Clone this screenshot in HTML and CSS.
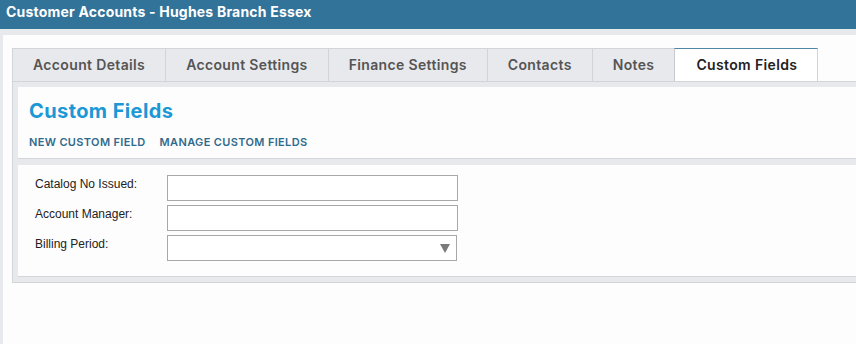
FILE: index.html
```html
<!DOCTYPE html>
<html lang="en">
<head>
<meta charset="utf-8">
<title>Customer Accounts - Hughes Branch Essex</title>
<link rel="stylesheet" href="styles.css">
</head>
<body>
<header class="appbar">Customer Accounts - Hughes Branch Essex</header>
<main class="page">
  <div class="tabbar">
    <div class="tab">Account Details</div>
    <div class="tab">Account Settings</div>
    <div class="tab">Finance Settings</div>
    <div class="tab">Contacts</div>
    <div class="tab">Notes</div>
    <div class="tab active">Custom Fields</div>
  </div>
  <div class="tabbody">
    <section class="panel head-panel">
      <h1 class="title">Custom Fields</h1>
      <nav class="links">
        <a class="link">NEW CUSTOM FIELD</a>
        <a class="link">MANAGE CUSTOM FIELDS</a>
      </nav>
    </section>
    <section class="panel form-panel">
      <div class="form">
        <label class="label">Catalog No Issued:</label>
        <input class="field" type="text">
        <label class="label">Account Manager:</label>
        <input class="field" type="text">
        <label class="label">Billing Period:</label>
        <div class="field select">
          <svg class="arrow" width="10" height="9" viewBox="0 0 10 9"><polygon points="0,0 10,0 5,9" fill="#7a7a7a"/></svg>
        </div>
      </div>
    </section>
  </div>
</main>
</body>
</html>
```

FILE: styles.css
```css
html, body {
  margin: 0;
  padding: 0;
  height: 100%;
}
body {
  background: #e8e9ed;
  overflow: hidden;
  font-family: Inter, "Open Sans", sans-serif;
}
.appbar {
  height: 29px;
  box-sizing: border-box;
  background: #32739a;
  color: #fff;
  font-weight: 700;
  font-size: 14px;
  line-height: 18px;
  padding: 3px 0 0 6px;
  letter-spacing: 0.2px;
}
.page {
  margin: 6px 0 0 3px;
  background: #fdfdfd;
  height: 315px;
  padding: 13px 0 0 9px;
  box-sizing: border-box;
}
.tabbar {
  display: flex;
  border-bottom: 1px solid #d2d4d8;
  height: 34px;
  box-sizing: border-box;
}
.tab {
  background: #e8e9ed;
  border-top: 1px solid #d2d4d8;
  border-right: 1px solid #d2d4d8;
  padding: 0 20px;
  font-size: 14px;
  font-weight: 600;
  color: #555;
  line-height: 32px;
  height: 33px;
  box-sizing: border-box;
  letter-spacing: 0.35px;
}
.tab:first-child {
  border-left: 1px solid #d2d4d8;
}
.tab.active {
  background: #fff;
  color: #222;
  border-top-color: #4f86a3;
  border-left: 1px solid #c8cace;
  margin-left: -1px;
  padding: 0 20px 0 21px;
}
.tabbody {
  background: #e8e9ed;
  border-left: 1px solid #d2d4d8;
  border-bottom: 1px solid #d2d4d8;
  padding: 5px 0 5px 5px;
  display: flex;
  flex-direction: column;
  gap: 6px;
}
.panel {
  background: #fdfdfd;
  border-bottom: 1px solid #d4d6da;
}
.head-panel {
  height: 72px;
  box-sizing: border-box;
  padding: 12px 0 0 11px;
}
.title {
  margin: 0;
  font-size: 20px;
  font-weight: 700;
  color: #1b98d5;
  line-height: 24px;
  letter-spacing: 0.4px;
}
.links {
  display: flex;
  gap: 14px;
  margin-top: 12px;
}
.link {
  font-size: 11px;
  font-weight: 600;
  color: #2f6b8c;
  line-height: 14px;
  letter-spacing: 0.35px;
}
.form-panel {
  padding: 10px 0 15px 17px;
}
.form {
  display: grid;
  grid-template-columns: 132px 291px;
  row-gap: 4px;
}
.label {
  font-family: "Liberation Sans", Arial, sans-serif;
  font-size: 12px;
  color: #222;
  padding-top: 2px;
  line-height: 14px;
}
.field {
  margin: 0;
  height: 26px;
  box-sizing: border-box;
  border: 1px solid #a8a8a8;
  background: #fff;
  border-radius: 0;
  padding: 0 4px;
  outline: none;
}
.select {
  width: 290px;
  height: 26px;
  display: flex;
  align-items: center;
  justify-content: flex-end;
  padding-right: 6px;
}
.arrow {
  display: block;
}
```
